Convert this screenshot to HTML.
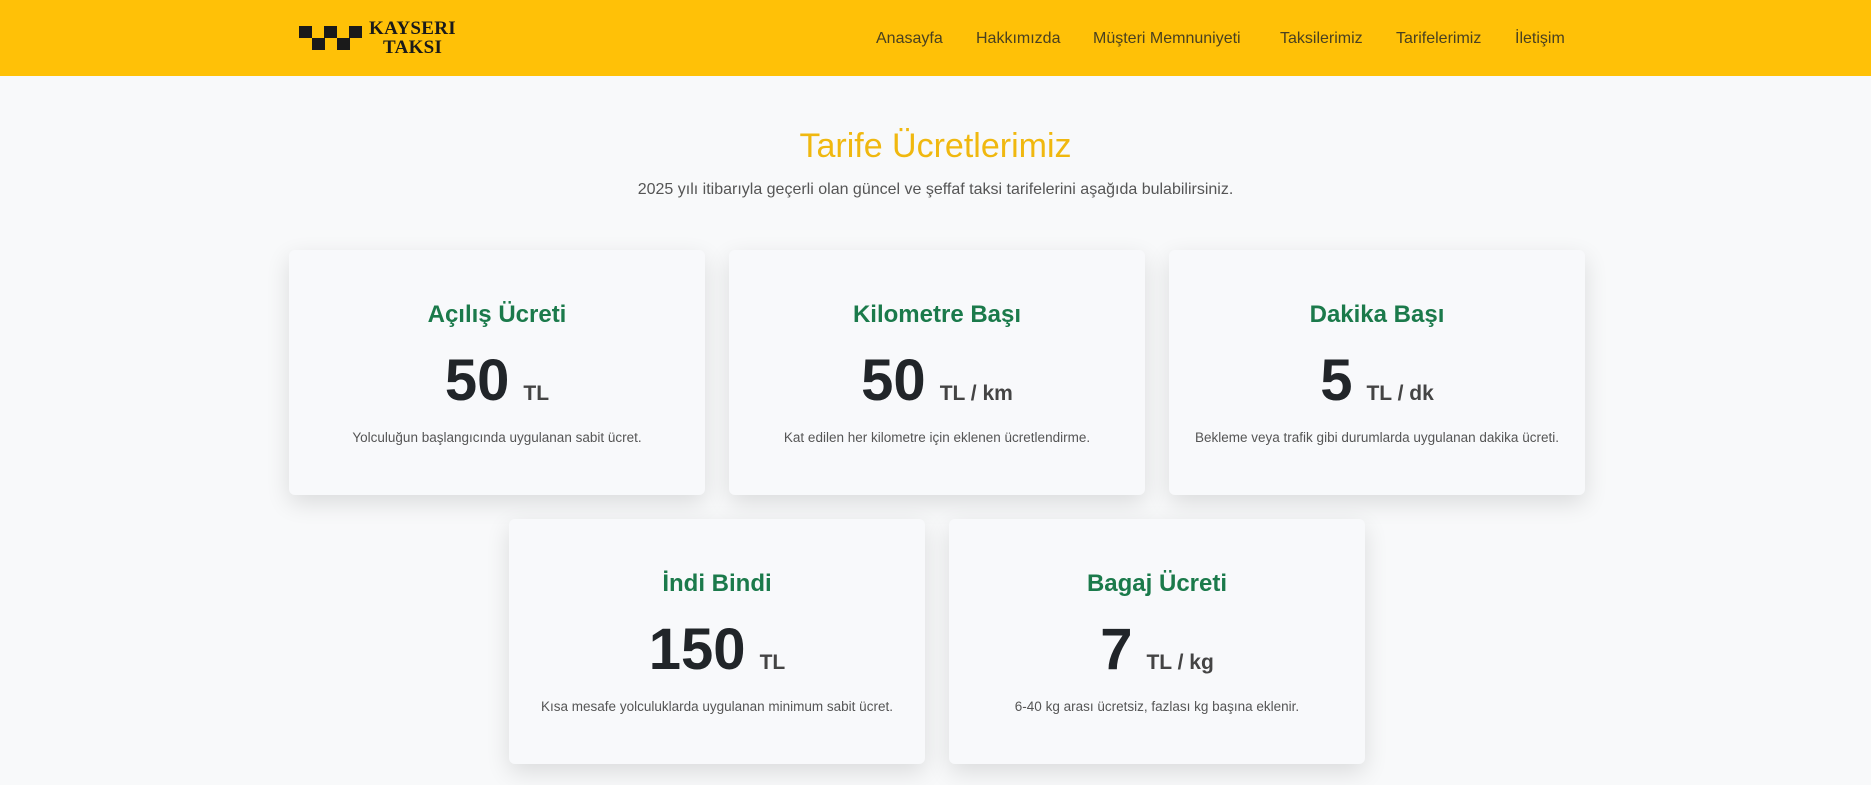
<!DOCTYPE html>
<html><head><meta charset="utf-8"><style>
*{margin:0;padding:0;box-sizing:border-box}
body{width:1871px;height:785px;overflow:hidden;background:#f8f9fa;font-family:"Liberation Sans",Arial,sans-serif;position:relative}
.hdr{position:absolute;left:0;top:0;width:1871px;height:76px;background:#ffc107}
.nav a{position:absolute;top:30px;font-size:16px;color:#4a4120;text-decoration:none;white-space:nowrap}
.logo .sq{position:absolute;width:13px;height:12px;background:#1a1a1a}
.logo .t{position:absolute;font-family:"Liberation Serif",serif;font-weight:bold;color:#1a1a1a;font-size:19px;letter-spacing:0.3px}
h1{position:absolute;left:0;width:1871px;top:127px;text-align:center;font-weight:normal;font-size:34px;color:#f0b80f}
.sub{position:absolute;left:0;width:1871px;top:181px;text-align:center;font-size:16px;color:#555}
.card{position:absolute;width:416px;height:245px;background:#f8f9fb;border-radius:6px;box-shadow:0 8px 24px rgba(0,0,0,.12);text-align:center}
.card h3{position:absolute;top:51px;width:100%;font-size:24px;color:#1b7a4b;font-weight:bold}
.card .n{position:absolute;top:97px;width:100%;font-size:58px;font-weight:bold;color:#212529}
.card .n span{font-size:21px;color:#444;margin-left:14px;vertical-align:0}
.card p{position:absolute;top:180px;width:100%;font-size:13.5px;color:#555}
</style></head><body>
<div class="hdr">
 <div class="logo">
  <div class="sq" style="left:299px;top:26px"></div><div class="sq" style="left:324px;top:26px"></div><div class="sq" style="left:349px;top:26px"></div>
  <div class="sq" style="left:312px;top:38px"></div><div class="sq" style="left:337px;top:38px"></div>
  <div class="t" style="left:369px;top:18px">KAYSERI</div>
  <div class="t" style="left:383px;top:37px">TAKSI</div>
 </div>
 <div class="nav">
  <a style="left:876px">Anasayfa</a>
  <a style="left:976px">Hakkımızda</a>
  <a style="left:1093px">Müşteri Memnuniyeti</a>
  <a style="left:1280px">Taksilerimiz</a>
  <a style="left:1396px">Tarifelerimiz</a>
  <a style="left:1515px">İletişim</a>
 </div>
</div>
<h1>Tarife Ücretlerimiz</h1>
<div class="sub">2025 yılı itibarıyla geçerli olan güncel ve şeffaf taksi tarifelerini aşağıda bulabilirsiniz.</div>
<div class="card" style="left:289px;top:250px"><h3>Açılış Ücreti</h3><div class="n">50<span>TL</span></div><p>Yolculuğun başlangıcında uygulanan sabit ücret.</p></div>
<div class="card" style="left:729px;top:250px"><h3>Kilometre Başı</h3><div class="n">50<span>TL / km</span></div><p>Kat edilen her kilometre için eklenen ücretlendirme.</p></div>
<div class="card" style="left:1169px;top:250px"><h3>Dakika Başı</h3><div class="n">5<span>TL / dk</span></div><p>Bekleme veya trafik gibi durumlarda uygulanan dakika ücreti.</p></div>
<div class="card" style="left:509px;top:519px"><h3>İndi Bindi</h3><div class="n">150<span>TL</span></div><p>Kısa mesafe yolculuklarda uygulanan minimum sabit ücret.</p></div>
<div class="card" style="left:949px;top:519px"><h3>Bagaj Ücreti</h3><div class="n">7<span>TL / kg</span></div><p>6-40 kg arası ücretsiz, fazlası kg başına eklenir.</p></div>
</body></html>
